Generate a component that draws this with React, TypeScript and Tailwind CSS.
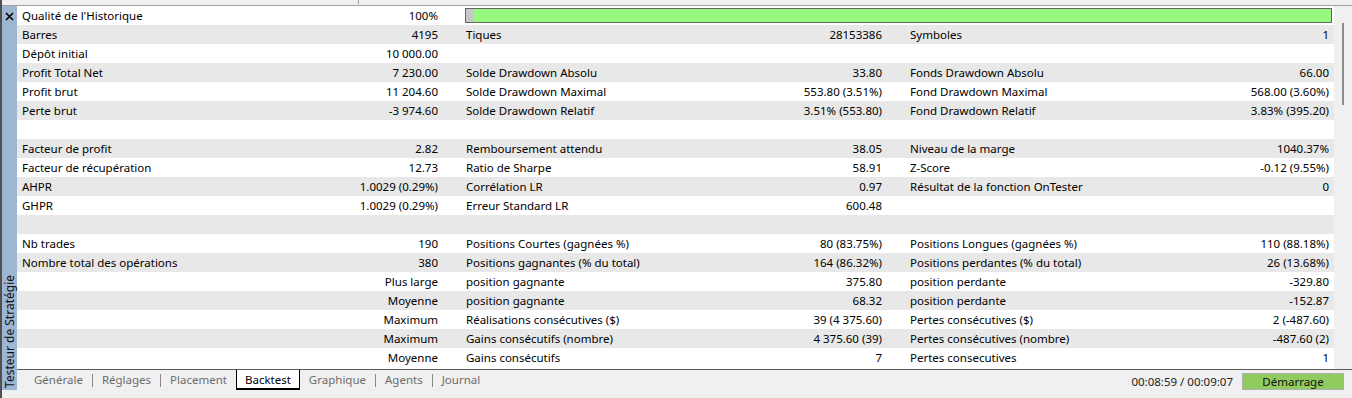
import React from 'react'

type Cell = [string, string] | null

const rows: (Cell[] | 'progress')[] = [
  'progress',
  [['Barres', '4195'], ['Tiques', '28153386'], ['Symboles', '1']],
  [['Dépôt initial', '10 000.00'], null, null],
  [['Profit Total Net', '7 230.00'], ['Solde Drawdown Absolu', '33.80'], ['Fonds Drawdown Absolu', '66.00']],
  [['Profit brut', '11 204.60'], ['Solde Drawdown Maximal', '553.80 (3.51%)'], ['Fond Drawdown Maximal', '568.00 (3.60%)']],
  [['Perte brut', '-3 974.60'], ['Solde Drawdown Relatif', '3.51% (553.80)'], ['Fond Drawdown Relatif', '3.83% (395.20)']],
  [null, null, null],
  [['Facteur de profit', '2.82'], ['Remboursement attendu', '38.05'], ['Niveau de la marge', '1040.37%']],
  [['Facteur de récupération', '12.73'], ['Ratio de Sharpe', '58.91'], ['Z-Score', '-0.12 (9.55%)']],
  [['AHPR', '1.0029 (0.29%)'], ['Corrélation LR', '0.97'], ['Résultat de la fonction OnTester', '0']],
  [['GHPR', '1.0029 (0.29%)'], ['Erreur Standard LR', '600.48'], null],
  [null, null, null],
  [['Nb trades', '190'], ['Positions Courtes (gagnées %)', '80 (83.75%)'], ['Positions Longues (gagnées %)', '110 (88.18%)']],
  [['Nombre total des opérations', '380'], ['Positions gagnantes (% du total)', '164 (86.32%)'], ['Positions perdantes (% du total)', '26 (13.68%)']],
  [['', 'Plus large'], ['position gagnante', '375.80'], ['position perdante', '-329.80']],
  [['', 'Moyenne'], ['position gagnante', '68.32'], ['position perdante', '-152.87']],
  [['', 'Maximum'], ['Réalisations consécutives ($)', '39 (4 375.60)'], ['Pertes consécutives ($)', '2 (-487.60)']],
  [['', 'Maximum'], ['Gains consécutifs (nombre)', '4 375.60 (39)'], ['Pertes consécutives (nombre)', '-487.60 (2)']],
  [['', 'Moyenne'], ['Gains consécutifs', '7'], ['Pertes consecutives', '1']],
]

const widths = ['w-[444px] pr-[23px]', 'w-[444px] pr-[23px]', 'w-[429px] pr-[5px]']

const tabs = ['Générale', 'Réglages', 'Placement', 'Backtest', 'Graphique', 'Agents', 'Journal']

const App = () => {
  return (
    <div className="w-[1352px] h-[398px] bg-[#f0f0f0] border-l-2 border-[#505050] flex flex-col text-[11.5px] text-black overflow-hidden" style={{ fontFamily: '"Noto Sans", "Open Sans", sans-serif' }}>
      <div className="h-[6px] border-b border-[#a0a0a0] relative">
        <div className="absolute left-[356px] top-0 h-[4px] w-px bg-[#a0a0a0]" />
      </div>
      <div className="flex flex-1">
        <div className="w-[15px] h-[384px] bg-[#9cb6d4] flex flex-col items-center justify-between">
          <svg width="9" height="9" viewBox="0 0 9 9" className="mt-[6px]">
            <path d="M1 1 L8 8 M8 1 L1 8" stroke="#000" strokeWidth="1.6" />
          </svg>
          <div className="rotate-180 whitespace-nowrap leading-[15px] text-[12px] text-[#111] mb-[2px]" style={{ writingMode: 'vertical-rl' }}>
            Testeur de Stratégie
          </div>
        </div>
        <div className="flex-1 flex flex-col">
          <div className="flex h-[363px]">
            <div className="w-[1317px] bg-white">
              {rows.map((row, i) => (
                <div key={i} className={`flex h-[19px] items-center leading-[19px] ${i % 2 ? 'bg-[#e8e8e8]' : 'bg-white'}`}>
                  {row === 'progress' ? (
                    <>
                      <div className="w-[444px] pl-[5px] pr-[23px] flex justify-between">
                        <span>Qualité de l'Historique</span>
                        <span>100%</span>
                      </div>
                      <div className="ml-[4px] w-[867px] h-[15px] border border-[#646464] bg-[#99f880] flex">
                        <div className="w-[8px] h-full bg-[#c8c8c8]" />
                      </div>
                    </>
                  ) : (
                    row.map((c, j) => (
                      <div key={j} className={`${widths[j]} pl-[5px] flex justify-between whitespace-nowrap`}>
                        <span>{c ? c[0] : ''}</span>
                        <span>{c ? c[1] : ''}</span>
                      </div>
                    ))
                  )}
                </div>
              ))}
            </div>
            <div className="flex-1 bg-[#f0f0f0] relative">
              <div className="absolute left-[8px] top-[17px] w-[2px] h-[82px] bg-[#8c8c8c]" />
            </div>
          </div>
          <div className="flex-1 border-t border-[#5a5a5a] flex items-start">
            <div className="flex items-center pl-[8px]">
              {tabs.map((t, i) => {
                const active = t === 'Backtest'
                const next = tabs[i + 1]
                const sep = i < tabs.length - 1 && !active && next !== 'Backtest'
                return (
                  <React.Fragment key={t}>
                    <div className={active ? 'px-[8px] h-[20px] leading-[19px] bg-white border-x border-b-2 border-black text-black' : 'px-[9px] h-[20px] leading-[19px] text-[#6d6d6d]'}>
                      {t}
                    </div>
                    {sep && <div className="w-px h-[13px] bg-[#8a8a8a]" />}
                  </React.Fragment>
                )
              })}
            </div>
            <div className="ml-auto flex items-center mt-[3px]">
              <span className="mr-[9px] text-[#222]">00:08:59 / 00:09:07</span>
              <div className="w-[102px] h-[17px] bg-[#8fcb5f] border border-[#b0b0b0] text-center leading-[15px] text-[#111] mr-[8px]">
                Démarrage
              </div>
            </div>
          </div>
        </div>
      </div>
    </div>
  )
}

export default App
